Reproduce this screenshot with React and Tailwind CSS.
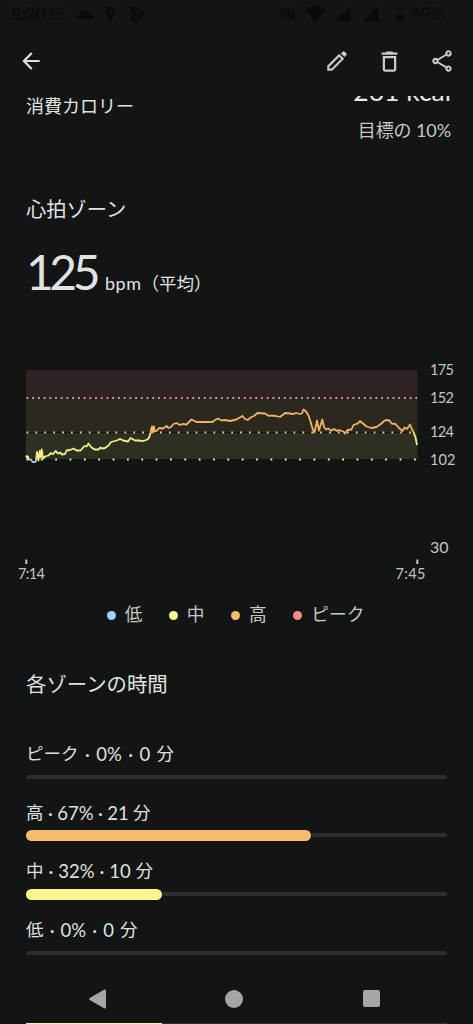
import React from "react";
import {
  MdArrowBack,
  MdBattery50,
  MdDeleteOutline,
  MdLocationOn,
  MdOutlineShare,
  MdSignalCellular4Bar,
} from "react-icons/md";

const zones = [
  { name: "ピーク", percent: 0, minutes: 0, width: 0, color: "bg-[#f28b82]", spacing: "[word-spacing:1.7px]" },
  { name: "高", percent: 67, minutes: 21, width: 285, color: "bg-[#f3bb6c]", spacing: "[word-spacing:-0.3px]" },
  { name: "中", percent: 32, minutes: 10, width: 136, color: "bg-[#fbf48f]", spacing: "[word-spacing:0.2px]" },
  { name: "低", percent: 0, minutes: 0, width: 0, color: "bg-[#a5d2fb]", spacing: "[word-spacing:1.4px]" },
];

const legend = [
  { name: "低", color: "bg-[#a5d2fb]" },
  { name: "中", color: "bg-[#fbf48f]" },
  { name: "高", color: "bg-[#f3bb6c]" },
  { name: "ピーク", color: "bg-[#f28b82]" },
];

const startLine = "26,95 27,97 28,96 29,99.5";

const lowLine = "29,99.5 31,99 32.5,101.5 35,101.5 36.5,100";

const mediumLine =
  "36,100 37,91.5 38.5,100 39.7,90.5 40.7,97 41.7,89 43,98 45,96 48.5,95 51,92.5 53,93.7 55.5,90.5 58,93 60,92 62,94 65,93.5 66.5,90 70,89.5 73.5,88 76.5,90 80.5,90 84.5,85.5 86.5,86 88.5,83 91,86.5 94.5,89 98.5,89 100.5,87 102,88 105,87.5 108.5,85 111,81.5 115,80.5 118,79.5 120,78.3 123,80 128,81 130.5,77.5 135,80 139,80 142,80.7 146.5,79.5 149,77.5 150.6,72";

const highLine =
  "150.6,72 151,69 152,66 153,71.5 153.8,66 155,71 156.5,70.5 159,67.5 163,68 166.5,65.5 168.5,67.5 171,66.5 173.5,63.5 176.5,62.5 180,64.5 182.5,63.5 186.5,64 189,61.5 191.5,59 196.5,61.5 205,61.5 212.5,61.5 215,59.5 218,58 221,59.8 225,59.5 230,60.5 236.5,59 242.5,55.5 244.5,58 247.5,59.5 251.5,56.5 254,55.5 257.5,52.5 265,53 269,55.5 271,55 276,55.5 280,56.5 285,52.5 293.5,53.5 296,52.5 300,53.5 302,53 303.5,49 306,51 308.5,55 310.5,61 312.5,68 314.5,72 317,60 319,70 322.3,59 324,66.5 326,69 328,68 331.5,70 334,68.5 337,70.5 339,69.5 341.5,70.5 343.5,71 345,73 347.5,69.5 351.5,69 353.5,64.5 358,62.8 360,60.5 361.5,62 363,63 366.5,66 371.5,67.5 376.5,66.5 381.5,63 384,60.5 386,59.5 389.5,60 391.5,63 395.5,63.5 399,67.5 402.5,70.5 404.5,67 407,68.5 410,64 412,69 413.5,71.5";

const StatusBar = () => (
  <div className="flex h-[27px] items-center justify-between pl-[11px] pr-[28px] text-[17px] text-[#090a0a]">
    <div className="flex items-center">
      <span className="w-[41px] tracking-[0.3px]">8:20</span>
      <svg width="13" height="13" viewBox="0 0 13 13" fill="none" stroke="currentColor">
        <path d="M1 1h9l2 2v7l-3 2H1zM4.500 3.500v5M8.500 3.500v5M6.500 3.500v5" />
      </svg>
      <svg className="ml-[11px]" width="17" height="10" viewBox="0 0 17 10" fill="currentColor">
        <path d="M0 10Q0 6 4 5Q6 1 9 1Q12 1 13.500 5Q17 6 17 10z" />
      </svg>
      <MdLocationOn className="ml-[9px]" size={17} />
      <svg className="ml-[11px]" width="17" height="16" viewBox="0 0 17 16" fill="none" stroke="currentColor" strokeWidth="1.500">
        <path d="M2 1.500h3L15 8 5 14.500H2zM5 5v6l5-3zM2 2l3 3M2 14l3-3" />
      </svg>
    </div>
    <div className="flex items-center">
      <svg width="18" height="17" viewBox="0 0 24 24" fill="none" stroke="currentColor" strokeWidth="2">
        <path d="M3 3l18 18M4 9h4l5-5v16l-5-5H4zM16 8q3 4 0 8M18 5q5 7 0 13" />
      </svg>
      <svg className="ml-[8px]" width="20" height="16" viewBox="0 0 20 16" fill="currentColor">
        <path d="M0 4Q10-4 20 4L10 16z" />
      </svg>
      <MdSignalCellular4Bar className="ml-[8px]" size={19} />
      <MdSignalCellular4Bar className="ml-[9px]" size={19} />
      <MdBattery50 className="ml-[11px]" size={18} />
      <span className="ml-[2px] w-[34px]">49%</span>
    </div>
  </div>
);

const TopBar = () => (
  <div className="flex h-[69px] items-center pl-[18px] pr-[18px] text-[#dfe1df]">
    <MdArrowBack size={26} className="mb-[1px]" />
    <div className="ml-auto flex items-center gap-[26px] text-[#c9cbc9]">
      <svg width="26" height="26" viewBox="0 0 24 24" fill="none" stroke="currentColor" strokeWidth="2" className="mb-[1px]">
        <path d="M4 20v-3.200L14 6.800l3.200 3.200L7.200 20z" />
        <path d="M15.600 5.100 17.500 3.200Q18.200 2.600 18.900 3.200L20.800 5.100Q21.400 5.800 20.800 6.500L18.900 8.400z" fill="currentColor" stroke="none" />
      </svg>
      <MdDeleteOutline size={27} className="mb-[1px]" />
      <MdOutlineShare size={26} className="mb-[1px]" />
    </div>
  </div>
);

const HeartChart = () => (
  <svg
    className="block"
    width="473"
    height="225"
    viewBox="0 0 473 225"
    fill="none"
    strokeLinejoin="round"
  >
    <path d="M26 37.500V11q0-2 2-2h387q2.500 0 2.500 2v26.500z" fill="#2d2322" />
    <rect x="26" y="37.500" width="391.500" height="34.500" fill="#2b281f" />
    <rect x="26" y="72" width="391.500" height="26" fill="#2d2f23" />

    {/* Zone limits */}
    <path d="M26.500 37H417" stroke="#e79a90" strokeWidth="2" strokeDasharray="1.800 3.920" />
    <path d="M26 71.500H417" stroke="#171712" strokeWidth="1" />
    <path d="M26.500 71.500H417" stroke="#f3c884" strokeWidth="2" strokeDasharray="1.800 7.100" />
    <path d="M26.500 98.500H417" stroke="#f7f2a5" strokeWidth="2" strokeDasharray="1.800 12.550" />

    {/* Heart rate */}
    <g strokeWidth="1.800" transform="translate(0 -0.500)">
      <polyline points={startLine} stroke="#f3ed85" />
      <polyline points={mediumLine} stroke="#f3ed85" />
      <polyline points={lowLine} stroke="#8fc3f0" />
      <polyline points={highLine} stroke="#f0b366" />
      <polyline points="413.5,71.5 415.5,77 417,84.5" stroke="#f3ed85" />
    </g>

    <g fill="#c3c5c3" fontSize="14.500">
      <text x="430" y="13.500" textLength="24">175</text>
      <text x="430" y="42" textLength="24">152</text>
      <text x="430" y="76" textLength="24">124</text>
      <text x="430" y="103.500" textLength="25.500">102</text>
      <text x="430" y="191.500" fontSize="15" textLength="18.500" lengthAdjust="spacingAndGlyphs">30</text>
      <text x="18" y="217.500" textLength="27">7:14</text>
      <text x="395.500" y="217.500" textLength="30">7:45</text>
    </g>
    <path d="M26.300 198.500v4.500M417.300 198.500v4.500" stroke="#c3c5c3" strokeWidth="2" />
  </svg>
);

const ZoneRow = ({ zone }) => (
  <div className="h-[58.700px]">
    <p className="flex h-[29.300px] text-[17.500px] leading-[24px] text-[#dfe1df]">
      <span>{zone.name}</span>
      <span className={`whitespace-pre text-[18.500px] ${zone.spacing}`}>
        {` · ${zone.percent}% · ${zone.minutes} `}
      </span>
      <span>分</span>
    </p>
    <div className="flex h-[11px] items-center">
      {zone.width > 0 && (
        <div
          className={`z-10 h-[11px] shrink-0 rounded-full ${zone.color}`}
          style={{ width: zone.width }}
        />
      )}
      <div className="h-1 grow rounded-full bg-[#2d2f2e]" />
    </div>
  </div>
);

const NavBar = () => (
  <div className="flex h-[47px] items-center justify-between pl-[88px] pr-[93px] text-[#a5a6a6]">
    <svg width="19" height="20" viewBox="0 0 19 20" fill="currentColor">
      <path d="M1.700 9 16 .8Q18 0 18 2v16q0 2-2 1.200L1.700 11q-1.500-1 0-2z" />
    </svg>
    <div className="mr-[2px] h-[18px] w-[18px] rounded-full bg-[#a5a6a6]" />
    <div className="h-[17px] w-[17px] rounded-[2px] bg-[#a5a6a6]" />
  </div>
);

const App = () => {
  return (
    <div className="flex h-[1024px] w-[473px] flex-col overflow-hidden bg-[#131514] font-['Lato','Noto_Sans_CJK_JP',sans-serif] text-[#e1e3e1]">
      <StatusBar />
      <TopBar />

      {/* Scrolled content */}
      <div className="flex h-[879px] flex-col overflow-hidden pt-[1px] [&>*]:shrink-0">
        <div className="flex h-[99px] justify-between pl-[26px] pr-[22px]">
          <p className="text-[18px] leading-[18px]">消費カロリー</p>
          <div className="text-right">
            <p className="-mt-[22px] h-[42px] text-[26.500px] leading-[32px] text-[#e8eae8]">
              261 kcal
            </p>
            <p className="text-[18px] leading-[26px] tracking-[-0.100px] text-[#c6c8c6]">目標の 10%</p>
          </div>
        </div>

        <h2 className="h-[50px] pl-[26px] text-[20.300px] leading-[26px]">心拍ゾーン</h2>
        <div className="flex h-[115px] items-baseline pl-[26px]">
          <span className="w-[79px] text-[48px] leading-[51px] tracking-[-4.500px]">125</span>
          <span className="text-[18px] tracking-[0.500px]">bpm</span>
          <span className="text-[17.500px]">（平均）</span>
        </div>

        <HeartChart />

        <div className="flex h-[85px] justify-center pr-[2px] pt-[16px]">
          {legend.map((item, i) => (
            <div
              key={item.name}
              className={`flex h-[26px] items-center text-[17.700px] text-[#c6c8c6] ${i > 0 ? "ml-[26.500px]" : ""}`}
            >
              <span className={`mr-[9px] h-[9px] w-[9px] rounded-full ${item.color}`} />
              {item.name}
            </div>
          ))}
        </div>

        <h2 className="h-[71px] pl-[26px] text-[20.400px] leading-[26px]">各ゾーンの時間</h2>
        <div className="pl-[26px] pr-[26px]">
          {zones.map((zone) => (
            <ZoneRow key={zone.name} zone={zone} />
          ))}
        </div>
      </div>

      <NavBar />

      {/* Top edge of the next bar, showing under the navigation */}
      <div className="mx-[26px] mt-[1px] flex h-[1px] bg-[#2d2f2e]">
        <div className="w-[136px] bg-[#fbf48f]" />
      </div>
    </div>
  );
};

export default App;
